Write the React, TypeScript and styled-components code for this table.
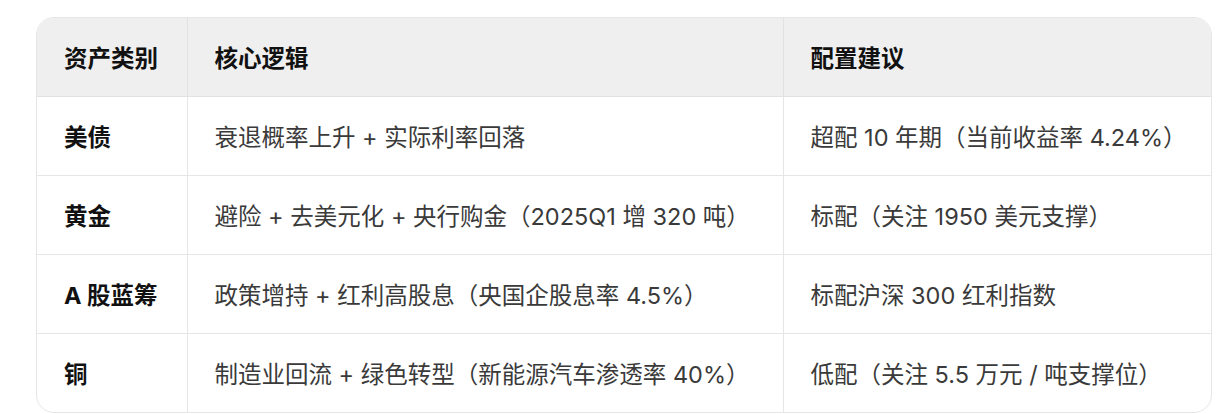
import React from "react";
import styled, { createGlobalStyle } from "styled-components";

const GlobalStyle = createGlobalStyle`
  html, body {
    margin: 0;
    padding: 0;
    background: #fff;
  }
  body {
    font-family: Inter, "Noto Sans CJK SC", sans-serif;
  }
`;

const rows = [
  ["美债", "衰退概率上升 + 实际利率回落", "超配 10 年期（当前收益率 4.24%）"],
  ["黄金", "避险 + 去美元化 + 央行购金（2025Q1 增 320 吨）", "标配（关注 1950 美元支撑）"],
  ["A 股蓝筹", "政策增持 + 红利高股息（央国企股息率 4.5%）", "标配沪深 300 红利指数"],
  ["铜", "制造业回流 + 绿色转型（新能源汽车渗透率 40%）", "低配（关注 5.5 万元 / 吨支撑位）"],
];

function App() {
  return (
    <>
      <GlobalStyle />
      <Page>
        <TableWrap>
          <Table>
            <colgroup>
              <col style={{ width: 150 }} />
              <col style={{ width: 596 }} />
              <col />
            </colgroup>
            <thead>
              <tr>
                <Th>资产类别</Th>
                <Th>核心逻辑</Th>
                <Th>配置建议</Th>
              </tr>
            </thead>
            <tbody>
              {rows.map((r, i) => (
                <tr key={i}>
                  <Td $strong>{r[0]}</Td>
                  <Td>{r[1]}</Td>
                  <Td>{r[2]}</Td>
                </tr>
              ))}
            </tbody>
          </Table>
        </TableWrap>
      </Page>
    </>
  );
}

const Page = styled.div`
  padding: 17px 20px 0 36px;
`;
const TableWrap = styled.div`
  width: 1176px;
  border: 1px solid #e6e6e6;
  border-radius: 18px;
  overflow: hidden;
  box-sizing: border-box;
`;
const Table = styled.table`
  width: 100%;
  border-collapse: collapse;
  table-layout: fixed;
`;
const Th = styled.th`
  height: 78px;
  padding: 0 12px 0 27px;
  background-color: #efefef;
  text-align: left;
  font-size: 23.5px;
  font-weight: 700;
  color: #111;
  white-space: nowrap;
  border-bottom: 1px solid #e2e2e2;
  & + & {
    border-left: 1px solid #e2e2e2;
  }
`;
const Td = styled.td<{ $strong?: boolean }>`
  height: 78px;
  padding: 0 12px 0 27px;
  font-size: 23.5px;
  font-weight: ${(p) => (p.$strong ? 700 : 400)};
  color: ${(p) => (p.$strong ? "#111" : "#3a3a3a")};
  white-space: nowrap;
  tr:not(:last-child) > & {
    border-bottom: 1px solid #e6e6e6;
  }
  & + & {
    border-left: 1px solid #e6e6e6;
  }
`;

export default App;
